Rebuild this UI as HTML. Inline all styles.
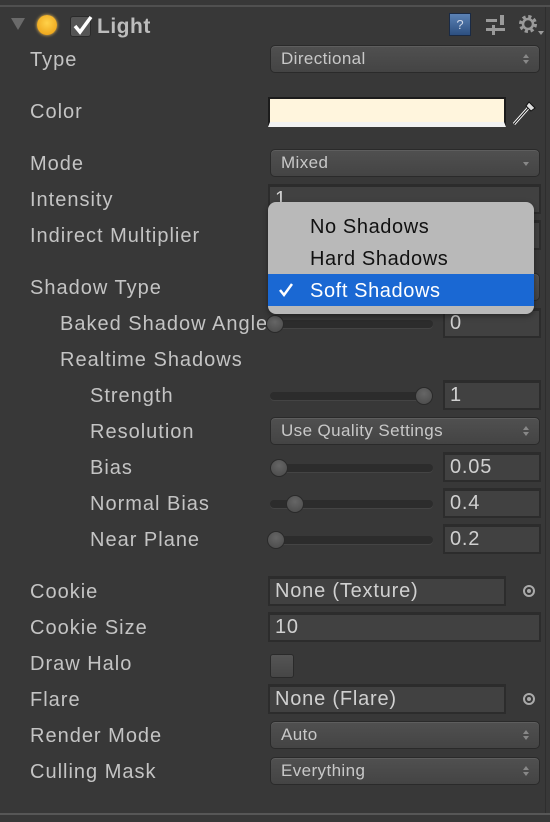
<!DOCTYPE html>
<html><head><meta charset="utf-8"><style>
*{margin:0;padding:0;box-sizing:border-box}
body{width:550px;height:822px;background:#383838;position:relative;overflow:hidden;font-family:"Liberation Sans",sans-serif;color:#c4c4c4}
.a{position:absolute}
.l{position:absolute;font-size:20px;line-height:24px;letter-spacing:1px;white-space:nowrap}
.pop{position:absolute;left:270px;width:270px;height:28px;border-radius:5px;background:linear-gradient(#505050,#444);border:1px solid #2a2a2a;box-shadow:inset 0 1px 0 #5e5e5e;font-size:17px;line-height:26px;padding-left:10px;color:#c8c8c8;letter-spacing:0.4px}
.pop .ar{position:absolute;right:10px;top:7px;width:6px;height:12px}
.fld{position:absolute;height:30px;background:#414141;border:2px solid #2c2c2c;border-top-width:3px;font-size:20px;line-height:24px;padding-left:5px;color:#d0d0d0;letter-spacing:0.8px}
.tr{position:absolute;left:270px;width:163px;height:8px;border-radius:4px;background:#2c2c2c;box-shadow:0 1px 0 #444}
.th{position:absolute;width:18px;height:18px;border-radius:50%;background:radial-gradient(circle at 50% 35%,#666,#484848);border:1px solid #2a2a2a}
</style></head><body>
<div class="a" style="left:0;top:5px;width:550px;height:2px;background:#505050"></div>
<div class="a" style="left:0;top:813px;width:550px;height:2px;background:#575757"></div>
<div class="a" style="left:545px;top:7px;width:1px;height:806px;background:#2e2e2e"></div>
<!-- header -->
<svg class="a" style="left:10px;top:17px" width="16" height="14"><polygon points="1,1 15,1 8,13" fill="#6a6a6a"/></svg>
<div class="a" style="left:37px;top:15px;width:20px;height:20px;border-radius:50%;background:radial-gradient(circle at 50% 40%,#ffd24a,#e99a10);box-shadow:0 0 3px #f5c45a"></div>
<div class="a" style="left:70px;top:16px;width:21px;height:21px;border-radius:3px;background:#555;border:1px solid #2a2a2a"></div>
<svg class="a" style="left:72px;top:14px" width="22" height="22"><path d="M3 12 L8 18 L19 3" stroke="#fff" stroke-width="3.5" fill="none"/></svg>
<div class="l" style="left:97px;top:15px;font-weight:bold;font-size:21px;color:#bdbdbd;letter-spacing:0.5px">Light</div>
<div class="a" style="left:449px;top:13px;width:22px;height:23px;background:linear-gradient(#5b82b5,#2c4f80);border:1px solid #1a2a44;color:#cfd8e8;font-size:13px;text-align:center;line-height:21px">?</div>
<svg class="a" style="left:485px;top:14px" width="22" height="22" fill="#9a9a9a"><rect x="1" y="5" width="11" height="3"/><rect x="15" y="1" width="4" height="10"/><rect x="1" y="14" width="6" height="3"/><rect x="10" y="14" width="10" height="3"/><rect x="7" y="11" width="3" height="10"/></svg>
<svg class="a" style="left:517px;top:13px" width="28" height="24"><circle cx="11" cy="11" r="7" fill="none" stroke="#9a9a9a" stroke-width="4" stroke-dasharray="3 2.5"/><circle cx="11" cy="11" r="5" fill="none" stroke="#9a9a9a" stroke-width="2.5"/><polygon points="21,18 27,18 24,22" fill="#9a9a9a"/></svg>

<div class="l" style="left:30px;top:48px">Type</div>
<div class="pop" style="top:45px">Directional<svg class="ar" viewBox="0 0 6 12"><path d="M0 5 L3 1 L6 5Z M0 7 L3 11 L6 7Z" fill="#888"/></svg></div>

<div class="l" style="left:30px;top:100px">Color</div>
<div class="a" style="left:268px;top:97px;width:238px;height:30px;background:#fff5dd;border:2px solid #1c1c1c;border-bottom:5px solid #f2f2f2"></div>
<svg class="a" style="left:510px;top:98px" width="28" height="30"><path d="M4 26 L20 8" stroke="#fff" stroke-width="3"/><path d="M4 26 L20 8" stroke="#111" stroke-width="1" /><path d="M19 4 L25 10 L21 13 L16 8Z" fill="#ddd" stroke="#111"/></svg>

<div class="l" style="left:30px;top:152px">Mode</div>
<div class="pop" style="top:149px">Mixed<svg class="ar" viewBox="0 0 6 12"><path d="M0 5 L6 5 L3 9Z" fill="#888"/></svg></div>

<div class="l" style="left:30px;top:188px">Intensity</div>
<div class="fld" style="left:268px;top:184px;width:273px">1</div>
<div class="l" style="left:30px;top:224px">Indirect Multiplier</div>
<div class="fld" style="left:268px;top:220px;width:273px"></div>

<div class="l" style="left:30px;top:276px">Shadow Type</div>
<div class="pop" style="top:273px"></div>

<div class="l" style="left:60px;top:312px;width:208px;overflow:hidden">Baked Shadow Angle</div>
<div class="tr" style="top:320px"></div><div class="th" style="left:266px;top:315px"></div>
<div class="fld" style="left:443px;top:308px;width:98px">0</div>

<div class="l" style="left:60px;top:348px">Realtime Shadows</div>
<div class="l" style="left:90px;top:384px">Strength</div>
<div class="tr" style="top:392px"></div><div class="th" style="left:415px;top:387px"></div>
<div class="fld" style="left:443px;top:380px;width:98px">1</div>
<div class="l" style="left:90px;top:420px">Resolution</div>
<div class="pop" style="top:417px">Use Quality Settings<svg class="ar" viewBox="0 0 6 12"><path d="M0 5 L3 1 L6 5Z M0 7 L3 11 L6 7Z" fill="#888"/></svg></div>
<div class="l" style="left:90px;top:456px">Bias</div>
<div class="tr" style="top:464px"></div><div class="th" style="left:270px;top:459px"></div>
<div class="fld" style="left:443px;top:452px;width:98px">0.05</div>
<div class="l" style="left:90px;top:492px">Normal Bias</div>
<div class="tr" style="top:500px"></div><div class="th" style="left:286px;top:495px"></div>
<div class="fld" style="left:443px;top:488px;width:98px">0.4</div>
<div class="l" style="left:90px;top:528px">Near Plane</div>
<div class="tr" style="top:536px"></div><div class="th" style="left:267px;top:531px"></div>
<div class="fld" style="left:443px;top:524px;width:98px">0.2</div>

<div class="l" style="left:30px;top:580px">Cookie</div>
<div class="fld" style="left:268px;top:576px;width:238px">None (Texture)</div>
<div class="a" style="left:523px;top:585px;width:12px;height:12px;border-radius:50%;border:2px solid #aaa"><div class="a" style="left:2px;top:2px;width:4px;height:4px;background:#aaa;border-radius:50%"></div></div>
<div class="l" style="left:30px;top:616px">Cookie Size</div>
<div class="fld" style="left:268px;top:612px;width:273px">10</div>
<div class="l" style="left:30px;top:652px">Draw Halo</div>
<div class="a" style="left:270px;top:654px;width:24px;height:24px;border-radius:3px;background:linear-gradient(#555,#464646);border:1px solid #2a2a2a"></div>
<div class="l" style="left:30px;top:688px">Flare</div>
<div class="fld" style="left:268px;top:684px;width:238px">None (Flare)</div>
<div class="a" style="left:523px;top:693px;width:12px;height:12px;border-radius:50%;border:2px solid #aaa"><div class="a" style="left:2px;top:2px;width:4px;height:4px;background:#aaa;border-radius:50%"></div></div>
<div class="l" style="left:30px;top:724px">Render Mode</div>
<div class="pop" style="top:721px">Auto<svg class="ar" viewBox="0 0 6 12"><path d="M0 5 L3 1 L6 5Z M0 7 L3 11 L6 7Z" fill="#888"/></svg></div>
<div class="l" style="left:30px;top:760px">Culling Mask</div>
<div class="pop" style="top:757px">Everything<svg class="ar" viewBox="0 0 6 12"><path d="M0 5 L3 1 L6 5Z M0 7 L3 11 L6 7Z" fill="#888"/></svg></div>

<!-- popup menu -->
<div class="a" style="left:268px;top:202px;width:266px;height:112px;background:#b9b9b9;border-radius:8px;box-shadow:0 2px 6px rgba(0,0,0,.4)">
 <div class="l" style="left:42px;top:13px;color:#111;letter-spacing:0.6px">No Shadows</div>
 <div class="l" style="left:42px;top:45px;color:#111;letter-spacing:0.6px">Hard Shadows</div>
 <div class="a" style="left:0;top:72px;width:266px;height:32px;background:#1a68d3"></div>
 <div class="l" style="left:42px;top:77px;color:#fff;letter-spacing:0.6px">Soft Shadows</div>
 <svg class="a" style="left:10px;top:80px" width="16" height="16"><path d="M2 8 L6 13 L14 2" stroke="#fff" stroke-width="2.5" fill="none"/></svg>
</div>
</body></html>
